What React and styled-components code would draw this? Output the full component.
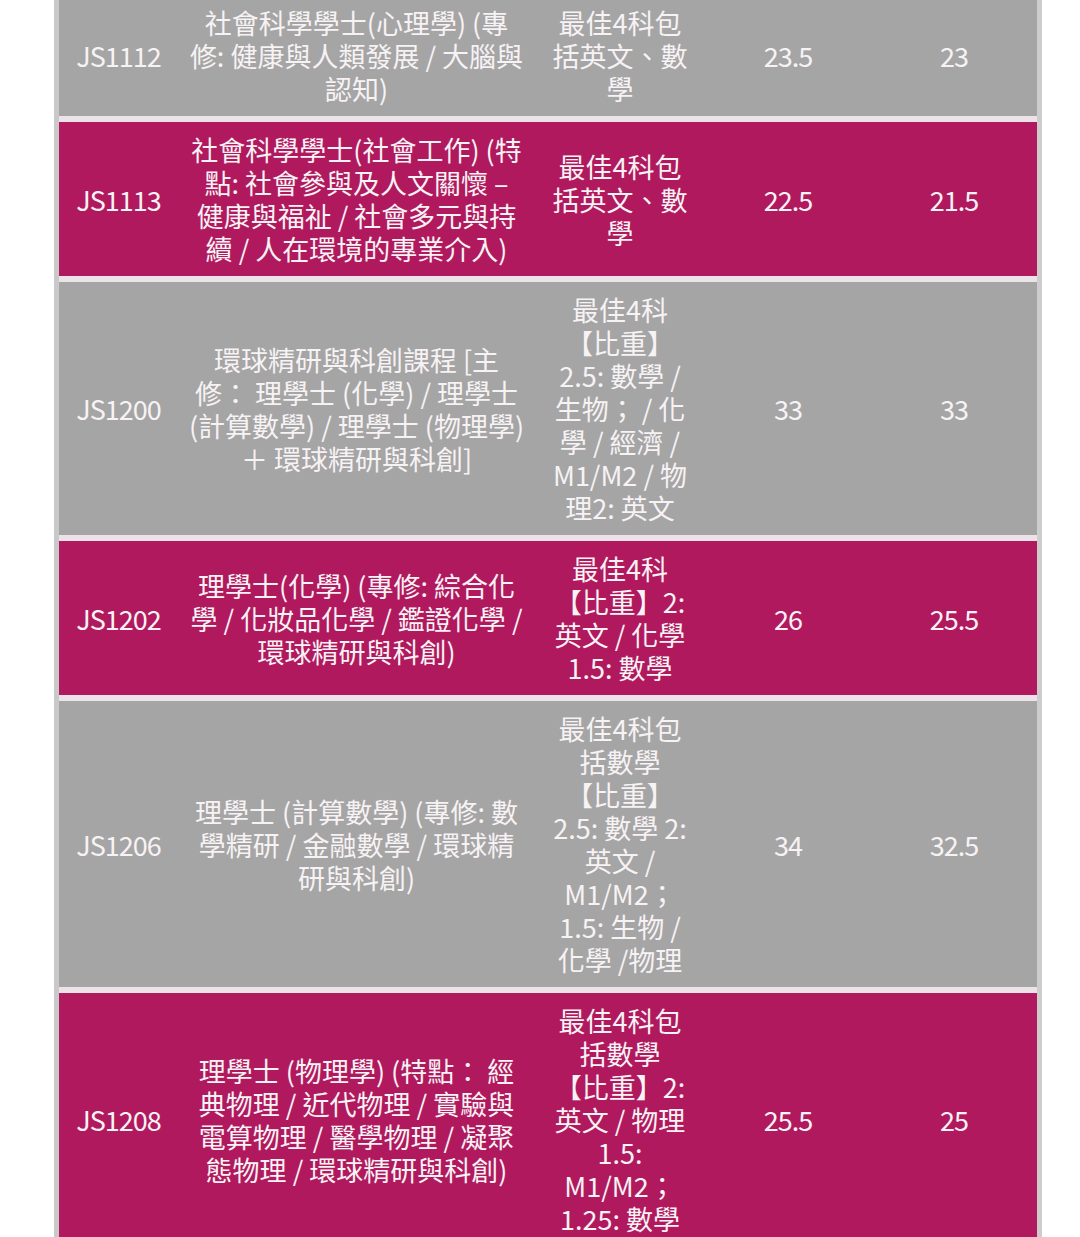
import React from 'react';
import styled, { createGlobalStyle } from 'styled-components';

const GlobalStyle = createGlobalStyle`
  html, body {
    margin: 0;
    padding: 0;
    background: #ffffff;
    overflow: hidden;
  }
  body {
    font-family: 'Noto Sans CJK TC', 'Noto Sans', sans-serif;
  }
`;

const Page = styled.div`
  width: 1080px;
  height: 1237px;
  overflow: hidden;
  background: #fff;
`;

const Table = styled.div`
  margin: -5px 0 0 54px;
  width: 978px;
  display: flex;
  flex-direction: column;
  gap: 6px;
  background: #ebe3e7;
  border-left: 5px solid #c9c9c9;
  border-right: 5px solid #cdcdcd;
`;

const Row = styled.div`
  display: grid;
  grid-template-columns: 119px 357px 170px 166px 1fr;
  align-items: center;
  background: ${(p) => (p.$pink ? '#b1195e' : '#a5a5a5')};
  color: #f7f2f4;
`;

const Cell = styled.div`
  padding: 11px 2px;
  font-size: 27px;
  line-height: 33px;
  text-align: center;
  white-space: pre-line;
  letter-spacing: ${(p) => (p.$num ? '-1px' : 'normal')};
`;

const rows = [
  {
    code: 'JS1112',
    name: '社會科學學士(心理學) (專\n修: 健康與人類發展 / 大腦與\n認知)',
    req: '最佳4科包\n括英文、數\n學',
    a: '23.5',
    b: '23',
  },
  {
    code: 'JS1113',
    name: '社會科學學士(社會工作) (特\n點: 社會參與及人文關懷 –\n健康與福祉 / 社會多元與持\n續 / 人在環境的專業介入)',
    req: '最佳4科包\n括英文、數\n學',
    a: '22.5',
    b: '21.5',
  },
  {
    code: 'JS1200',
    name: '環球精研與科創課程 [主\n修： 理學士 (化學) / 理學士\n(計算數學) / 理學士 (物理學)\n＋ 環球精研與科創]',
    req: '最佳4科\n【比重】\n2.5: 數學 /\n生物； / 化\n學 / 經濟 /\nM1/M2 / 物\n理2: 英文',
    a: '33',
    b: '33',
  },
  {
    code: 'JS1202',
    name: '理學士(化學) (專修: 綜合化\n學 / 化妝品化學 / 鑑證化學 /\n環球精研與科創)',
    req: '最佳4科\n【比重】2:\n英文 / 化學\n1.5: 數學',
    a: '26',
    b: '25.5',
  },
  {
    code: 'JS1206',
    name: '理學士 (計算數學) (專修: 數\n學精研 / 金融數學 / 環球精\n研與科創)',
    req: '最佳4科包\n括數學\n【比重】\n2.5: 數學 2:\n英文 /\nM1/M2；\n1.5: 生物 /\n化學 /物理',
    a: '34',
    b: '32.5',
  },
  {
    code: 'JS1208',
    name: '理學士 (物理學) (特點： 經\n典物理 / 近代物理 / 實驗與\n電算物理 / 醫學物理 / 凝聚\n態物理 / 環球精研與科創)',
    req: '最佳4科包\n括數學\n【比重】2:\n英文 / 物理\n1.5:\nM1/M2；\n1.25: 數學',
    a: '25.5',
    b: '25',
  },
];

export default function App() {
  return (
    <Page>
      <GlobalStyle />
      <Table>
        {rows.map((r, i) => (
          <Row key={r.code} $pink={i % 2 === 1}>
            <Cell $num>{r.code}</Cell>
            <Cell>{r.name}</Cell>
            <Cell>{r.req}</Cell>
            <Cell $num>{r.a}</Cell>
            <Cell $num>{r.b}</Cell>
          </Row>
        ))}
      </Table>
    </Page>
  );
}
